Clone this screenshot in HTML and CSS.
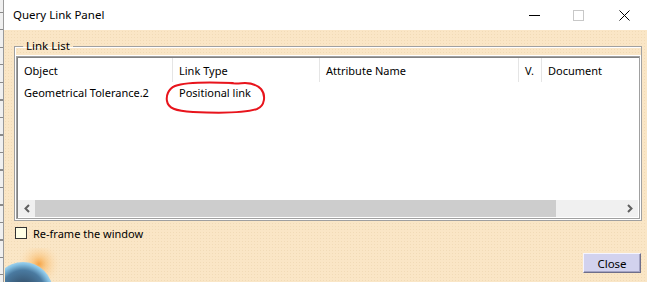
FILE: index.html
```html
<!DOCTYPE html>
<html lang="en">
<head>
    <meta charset="UTF-8">
    <title>Query Link Panel</title>
    <link rel="stylesheet" href="styles.css">
</head>
<body>

<!-- Край окна позади -->
<div class="edge"></div>

<!-- Диалог -->
<div class="dialog">
    <div class="titlebar">
        <span class="title">Query Link Panel</span>
        <div class="controls">
            <span class="ctl min"><svg width="11" height="11" viewBox="0 0 11 11"><path d="M0 5.5 H11" stroke="#000" stroke-width="1"/></svg></span>
            <span class="ctl max"><svg width="11" height="11" viewBox="0 0 11 11"><rect x="0.5" y="0.5" width="10" height="10" fill="none" stroke="#c8c8c8"/></svg></span>
            <span class="ctl close-x"><svg width="11" height="11" viewBox="0 0 11 11"><path d="M0.5 0.5 L10.5 10.5 M10.5 0.5 L0.5 10.5" stroke="#000" stroke-width="1"/></svg></span>
        </div>
    </div>

    <div class="panel">
        <fieldset class="group">
            <legend>Link List</legend>
            <div class="list">
                <div class="rows">
                    <div class="row head">
                        <div class="cell">Object</div>
                        <div class="cell">Link Type</div>
                        <div class="cell">Attribute Name</div>
                        <div class="cell">V.</div>
                        <div class="cell last">Document</div>
                    </div>
                    <div class="row">
                        <div class="cell">Geometrical Tolerance.2</div>
                        <div class="cell">Positional link</div>
                        <div class="cell"></div>
                        <div class="cell"></div>
                        <div class="cell last"></div>
                    </div>
                </div>
                <div class="hscroll">
                    <span class="arrow"><svg width="8" height="9" viewBox="0 0 8 9"><path d="M6 1 L2.5 4.5 L6 8" fill="none" stroke="#606060" stroke-width="2"/></svg></span>
                    <span class="thumb"></span>
                    <span class="track"></span>
                    <span class="arrow"><svg width="8" height="9" viewBox="0 0 8 9"><path d="M2 1 L5.5 4.5 L2 8" fill="none" stroke="#606060" stroke-width="2"/></svg></span>
                </div>
            </div>
        </fieldset>

        <label class="check">
            <span class="box"></span>
            Re-frame the window
        </label>

        <div class="footer">
            <button class="btn">Close</button>
        </div>
    </div>
</div>

<!-- Пометка от руки -->
<svg class="mark" width="104" height="36" viewBox="0 0 104 36">
    <path d="M68 3 C45 2, 20 2, 10 6 C3 9, 1 16, 2 21 C3 28, 10 31, 28 32 C50 33, 80 33, 92 29 C100 26, 101 15, 96 9 C92 5, 85 3, 80 3 C76 3, 72 4, 64 3"
          fill="none" stroke="#e8141c" stroke-width="2" stroke-linecap="round"/>
</svg>

<!-- Глобус в углу -->
<svg class="globe" width="70" height="34" viewBox="0 0 70 34">
    <defs>
        <radialGradient id="glow" cx="34" cy="16" r="22" gradientUnits="userSpaceOnUse">
            <stop offset="0" stop-color="#f6a446"/>
            <stop offset="0.3" stop-color="#f9c27a" stop-opacity="0.8"/>
            <stop offset="1" stop-color="#fde3bd" stop-opacity="0"/>
        </radialGradient>
        <radialGradient id="ball" cx="18" cy="44" r="31" gradientUnits="userSpaceOnUse">
            <stop offset="0" stop-color="#2a3d52"/>
            <stop offset="0.7" stop-color="#4a7aa0"/>
            <stop offset="0.9" stop-color="#86c2e4"/>
            <stop offset="1" stop-color="#b0daf0"/>
        </radialGradient>
    </defs>
    <rect width="70" height="34" fill="url(#glow)"/>
    <circle cx="18" cy="44" r="30" fill="url(#ball)"/>
</svg>

</body>
</html>
```

FILE: styles.css
```css
* {
    margin: 0;
    padding: 0;
    box-sizing: border-box;
}

body, html {
    width: 647px;
    height: 282px;
    overflow: hidden;
}

body {
    display: flex;
    position: relative;
    font-family: "Noto Sans", "Open Sans", sans-serif;
    font-size: 11px;
    color: #000;
    background: #f0f0f0;
}

/* Край окна позади */
.edge {
    width: 4px;
    border-right: 1px solid #9a9a9a;
    background: repeating-linear-gradient(to bottom, #f0f0f0 0, #f0f0f0 12px, #8a8a8a 12px, #8a8a8a 13px, #f0f0f0 13px, #f0f0f0 17.5px);
}

/* Диалог */
.dialog {
    flex: 1;
    display: flex;
    flex-direction: column;
}

.titlebar {
    height: 30px;
    background: #fff;
    display: flex;
    align-items: center;
    padding-left: 9px;
    font-size: 11.5px;
}

.title {
    flex: 1;
    line-height: 16px;
}

.controls {
    display: flex;
    align-items: center;
    height: 100%;
}

.ctl {
    width: 46px;
    height: 100%;
    display: flex;
    align-items: center;
    justify-content: center;
}

.ctl svg {
    display: block;
}

.min {
    margin-right: -2px;
}

/* Основная панель */
.panel {
    flex: 1;
    display: flex;
    flex-direction: column;
    padding: 8px 5px 9px 10px;
    background-color: #fae6c6;
    background-image: radial-gradient(rgba(200, 170, 120, 0.18) 0.6px, transparent 0.8px);
    background-size: 3px 3px;
}

.group {
    border: 1px solid #a0a0a0;
    box-shadow: inset 1px 1px 0 #fff;
    padding: 2px 1px 1px 1px;
}

.group legend {
    margin-left: 7px;
    padding: 0 3px;
    line-height: 16px;
    font-size: 11.5px;
}

/* Список */
.list {
    height: 163px;
    display: flex;
    flex-direction: column;
    background: #fff;
    border: 1px solid #a0a0a0;
    box-shadow: inset 1px 1px 0 #828282, 0 0 0 1px #fff;
}

.rows {
    flex: 1;
    padding: 1px 0 0 1px;
}

.row {
    display: grid;
    grid-template-columns: 155px 147px 199px 23px 1fr;
    height: 20px;
    align-items: center;
}

.row.head {
    height: 24px;
}

.cell {
    padding-left: 6px;
    white-space: nowrap;
    height: 100%;
    display: flex;
    align-items: center;
}

.head .cell {
    border-right: 1px solid #e5e5e5;
}

.head .cell.last {
    border-right: none;
}

.hscroll {
    height: 17px;
    display: flex;
    background: #f0f0f0;
    margin: 0 1px 1px 1px;
}

.arrow {
    width: 17px;
    display: flex;
    align-items: center;
    justify-content: center;
}

.thumb {
    width: 521px;
    background: #cdcdcd;
}

.track {
    flex: 1;
}

/* Флажок */
.check {
    display: flex;
    align-items: center;
    gap: 6px;
    margin-top: 5px;
    margin-left: 1px;
    height: 14px;
}

.check .box {
    width: 12px;
    height: 12px;
    background: #ffffe6;
    border: 1px solid #333;
}

/* Кнопка */
.footer {
    margin-top: auto;
    display: flex;
    justify-content: flex-end;
    padding-right: 1px;
}

.btn {
    width: 58px;
    height: 20px;
    font-family: "Noto Sans", "Open Sans", sans-serif;
    font-size: 11.5px;
    color: #000;
    background: #d2d2ee;
    border: 1px solid;
    border-color: #f4f4ff #6e6e8a #6e6e8a #f4f4ff;
    box-shadow: inset -1px -1px 0 #a4a4c4;
}

/* Пометка и глобус поверх */
.mark {
    position: absolute;
    left: 165px;
    top: 80px;
}

.globe {
    position: absolute;
    left: 5px;
    top: 248px;
}
```
